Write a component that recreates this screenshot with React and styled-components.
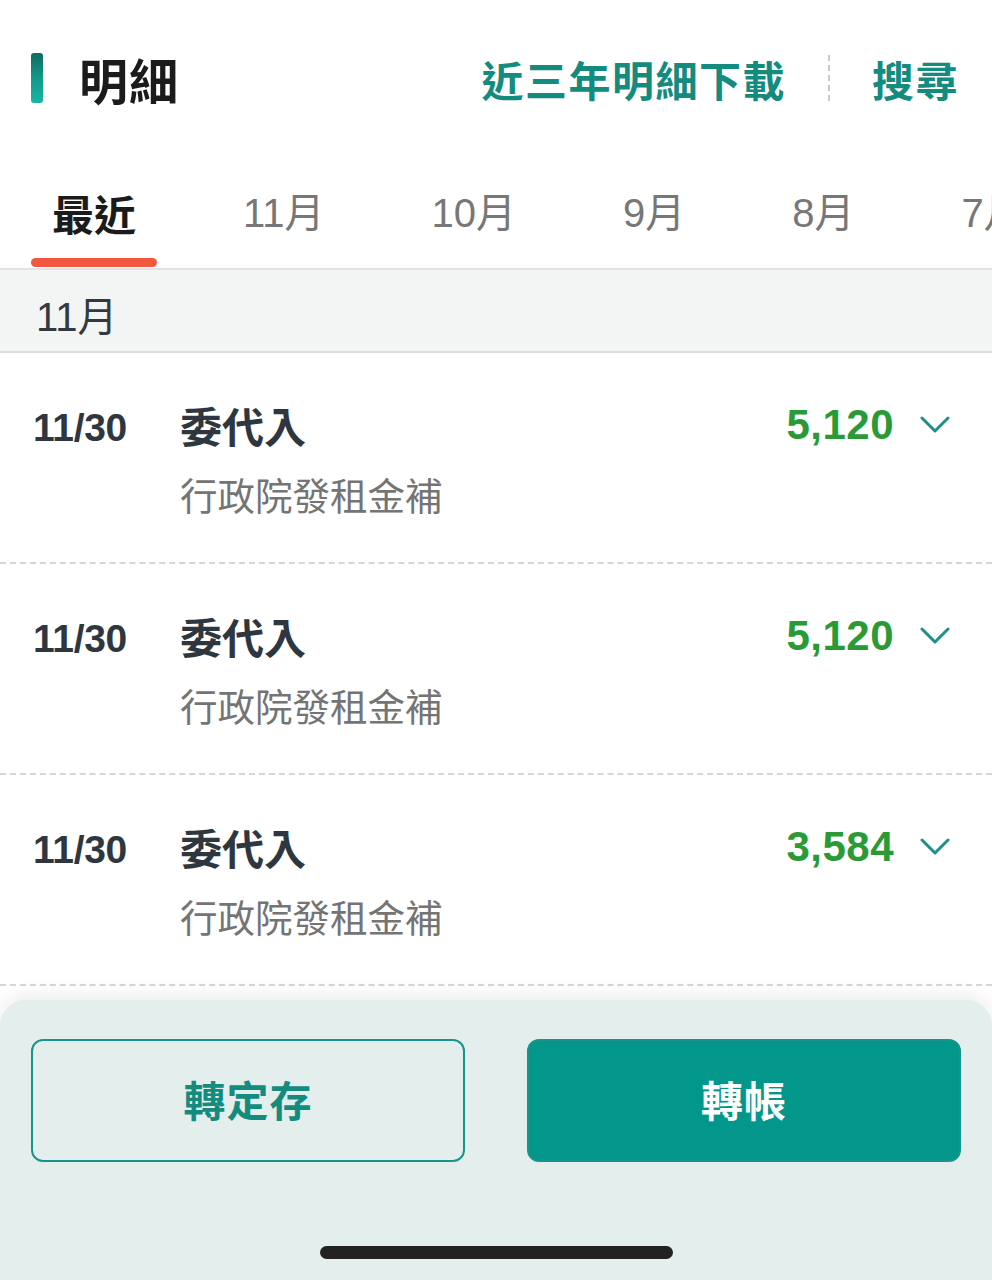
import React from "react";
import styled, { createGlobalStyle } from "styled-components";

const GlobalStyle = createGlobalStyle`
  body {
    margin: 0;
    background: #ffffff;
    font-family: "Liberation Sans", "Noto Sans CJK TC", sans-serif;
  }
`;

const Page = styled.div`
  width: 992px;
  height: 1280px;
  display: flex;
  flex-direction: column;
  overflow: hidden;
  background: #ffffff;
`;

const Header = styled.div`
  height: 160px;
  padding: 0 33px 4px 31px;
  display: flex;
  align-items: center;
  box-sizing: border-box;
`;

const TitleBar = styled.div`
  width: 12px;
  height: 50px;
  border-radius: 3px;
  background: linear-gradient(180deg, #0e6b62 0%, #129c8c 55%, #17b7a5 100%);
`;

const Title = styled.h1`
  margin: 0 0 0 36px;
  font-size: 49px;
  font-weight: 700;
  color: #1b1b1b;
  font-family: "Noto Sans CJK TC", sans-serif;
  letter-spacing: 1px;
`;

const HeaderLinks = styled.div`
  margin-left: auto;
  display: flex;
  align-items: center;
`;

const HeaderLink = styled.span`
  font-family: "Noto Sans CJK TC", sans-serif;
  font-size: 42px;
  font-weight: 700;
  color: #138c7f;
  letter-spacing: 1.5px;
`;

const DashDivider = styled.div`
  width: 0;
  height: 46px;
  margin: 0 42px;
  border-left: 2px dashed #c9c9c9;
`;

const TabBar = styled.div`
  height: 110px;
  box-sizing: border-box;
  border-bottom: 2px solid #dfe4e4;
  display: flex;
  gap: 65px;
  padding-left: 31px;
  overflow: hidden;
  white-space: nowrap;
`;

const Tab = styled.div`
  display: flex;
  flex-direction: column;
  align-items: stretch;
  flex-shrink: 0;
`;

const TabLabel = styled.span`
  padding: 28px 21px 0;
  line-height: 50px;
  font-size: ${(p) => (p.$active ? "42px" : "40px")};
  font-weight: ${(p) => (p.$active ? 700 : 400)};
  color: ${(p) => (p.$active ? "#1b1b1b" : "#777777")};
  font-family: ${(p) =>
    p.$active ? '"Noto Sans CJK TC", sans-serif' : '"Liberation Sans", "Noto Sans CJK TC", sans-serif'};
  text-align: center;
`;

const Underline = styled.div`
  margin-top: auto;
  height: 9px;
  border-radius: 5px;
  background: ${(p) => (p.$active ? "#f2573f" : "transparent")};
  margin-bottom: 1px;
`;

const MonthBand = styled.div`
  height: 83px;
  box-sizing: border-box;
  background: #f3f4f4;
  border-bottom: 2px solid #d9dfdf;
  display: flex;
  align-items: center;
  padding: 6px 0 0 36px;
  font-size: 40px;
  color: #333a3f;
`;

const Row = styled.div`
  height: 211px;
  box-sizing: border-box;
  border-bottom: 2px dashed #d6d6d6;
  display: flex;
  align-items: flex-start;
  padding: 50px 42px 0 33px;
`;

const DateText = styled.span`
  width: 147px;
  flex-shrink: 0;
  margin-top: 3px;
  line-height: 44px;
  font-size: 39px;
  font-weight: 700;
  color: #2e3740;
  letter-spacing: -0.3px;
`;

const Info = styled.div`
  display: flex;
  flex-direction: column;
`;

const RowTitle = styled.span`
  line-height: 44px;
  font-family: "Noto Sans CJK TC", sans-serif;
  font-size: 42px;
  font-weight: 700;
  color: #2e3740;
`;

const RowSub = styled.span`
  margin-top: 25px;
  line-height: 44px;
  font-family: "Noto Sans CJK TC", sans-serif;
  font-size: 37.5px;
  color: #747474;
`;

const Amount = styled.span`
  margin-left: auto;
  line-height: 44px;
  font-size: 42px;
  font-weight: 700;
  color: #2a9a36;
  letter-spacing: 0.5px;
`;

const Chevron = styled.svg`
  margin: 13px 0 0 26px;
  flex-shrink: 0;
`;

const Panel = styled.div`
  margin-top: auto;
  height: 280px;
  box-sizing: border-box;
  background: #e4eeed;
  border-radius: 26px 26px 0 0;
  box-shadow: 0 -6px 18px rgba(0, 0, 0, 0.07);
  padding: 39px 31px 0;
  display: flex;
  flex-direction: column;
  align-items: center;
`;

const ButtonRow = styled.div`
  width: 100%;
  display: grid;
  grid-template-columns: 1fr 1fr;
  gap: 62px;
`;

const ActionButton = styled.button`
  height: 123px;
  border-radius: 12px;
  border: 2px solid #17958a;
  background: ${(p) => (p.$primary ? "#03968a" : "transparent")};
  color: ${(p) => (p.$primary ? "#ffffff" : "#138c7f")};
  font-family: "Noto Sans CJK TC", sans-serif;
  font-size: 42px;
  font-weight: 700;
  letter-spacing: 1px;
  padding: 0 0 4px;
  cursor: pointer;
`;

const HomeIndicator = styled.div`
  margin-top: 84px;
  width: 353px;
  height: 13px;
  border-radius: 7px;
  background: #222222;
`;

const tabs = ["最近", "11月", "10月", "9月", "8月", "7月"];

const items = [
  { date: "11/30", title: "委代入", sub: "行政院發租金補", amount: "5,120" },
  { date: "11/30", title: "委代入", sub: "行政院發租金補", amount: "5,120" },
  { date: "11/30", title: "委代入", sub: "行政院發租金補", amount: "3,584" },
];

export default function App() {
  return (
    <Page>
      <GlobalStyle />
      <Header>
        <TitleBar />
        <Title>明細</Title>
        <HeaderLinks>
          <HeaderLink>近三年明細下載</HeaderLink>
          <DashDivider />
          <HeaderLink>搜尋</HeaderLink>
        </HeaderLinks>
      </Header>

      <TabBar>
        {tabs.map((t, i) => (
          <Tab key={t}>
            <TabLabel $active={i === 0}>{t}</TabLabel>
            <Underline $active={i === 0} />
          </Tab>
        ))}
      </TabBar>

      <MonthBand>11月</MonthBand>

      {items.map((it, i) => (
        <Row key={i}>
          <DateText>{it.date}</DateText>
          <Info>
            <RowTitle>{it.title}</RowTitle>
            <RowSub>{it.sub}</RowSub>
          </Info>
          <Amount>{it.amount}</Amount>
          <Chevron width="30" height="18" viewBox="0 0 30 18">
            <polyline
              points="2,2 15,15 28,2"
              fill="none"
              stroke="#1f8f8c"
              strokeWidth="3"
              strokeLinecap="round"
              strokeLinejoin="round"
            />
          </Chevron>
        </Row>
      ))}

      <Panel>
        <ButtonRow>
          <ActionButton>轉定存</ActionButton>
          <ActionButton $primary>轉帳</ActionButton>
        </ButtonRow>
        <HomeIndicator />
      </Panel>
    </Page>
  );
}
